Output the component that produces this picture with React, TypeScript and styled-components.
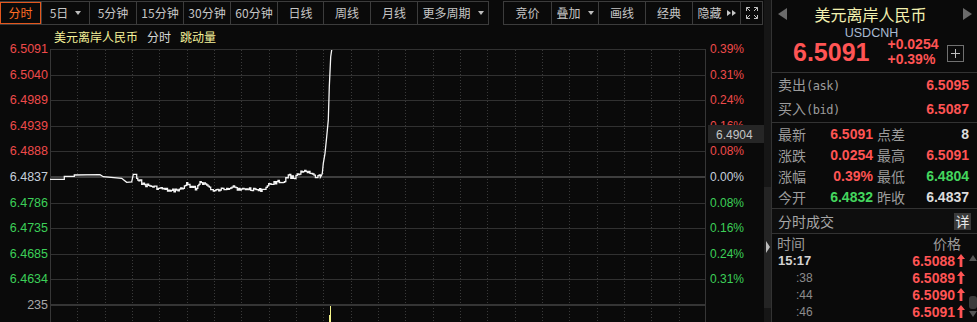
import { FC } from 'react'
import styled, { createGlobalStyle, css } from 'styled-components'

const CJK = `'Noto Sans CJK SC', 'Liberation Sans', sans-serif`
const NUM = `'Liberation Sans', Arial, sans-serif`

const AXIS_RED = '#ee4a4a'
const AXIS_GREEN = '#3ccf58'
const RED = '#ff5454'
const GREEN = '#44d65e'
const GRID = '#313131'

type Tone = 'up' | 'down' | 'flat' | 'mute'

const toneColor = (tone: Tone, axis = false) => {
	switch (tone) {
		case 'up':
			return axis ? AXIS_RED : RED
		case 'down':
			return axis ? AXIS_GREEN : GREEN
		case 'flat':
			return axis ? '#c6d0dc' : '#dcdcdc'
		default:
			return '#9a9a9a'
	}
}

// plot area origin on the page
const PLOT_X = 50
const PLOT_Y = 49
const PLOT_W = 656
const PLOT_H = 273
const ROW = 25.6

const tabsLeft = [
	{ label: '分时', w: 42, active: true },
	{ label: '5日', w: 48, caret: true },
	{ label: '5分钟', w: 47 },
	{ label: '15分钟', w: 47 },
	{ label: '30分钟', w: 47 },
	{ label: '60分钟', w: 47 },
	{ label: '日线', w: 46 },
	{ label: '周线', w: 47 },
	{ label: '月线', w: 47 },
	{ label: '更多周期', w: 71, caret: true }
]

const tabsRight = [
	{ label: '竞价', w: 48 },
	{ label: '叠加', w: 47, caret: true },
	{ label: '画线', w: 47 },
	{ label: '经典', w: 47 },
	{ label: '隐藏', w: 48, more: true }
]

const priceTicks: { text: string; tone: Tone }[] = [
	{ text: '6.5091', tone: 'up' },
	{ text: '6.5040', tone: 'up' },
	{ text: '6.4989', tone: 'up' },
	{ text: '6.4939', tone: 'up' },
	{ text: '6.4888', tone: 'up' },
	{ text: '6.4837', tone: 'flat' },
	{ text: '6.4786', tone: 'down' },
	{ text: '6.4735', tone: 'down' },
	{ text: '6.4685', tone: 'down' },
	{ text: '6.4634', tone: 'down' }
]

const pctTicks: { text: string; tone: Tone }[] = [
	{ text: '0.39%', tone: 'up' },
	{ text: '0.31%', tone: 'up' },
	{ text: '0.24%', tone: 'up' },
	{ text: '0.16%', tone: 'up' },
	{ text: '0.08%', tone: 'up' },
	{ text: '0.00%', tone: 'flat' },
	{ text: '0.08%', tone: 'down' },
	{ text: '0.16%', tone: 'down' },
	{ text: '0.24%', tone: 'down' },
	{ text: '0.31%', tone: 'down' }
]

const stats: { l1: string; v1: string; t1: Tone; l2: string; v2: string; t2: Tone }[] = [
	{ l1: '最新', v1: '6.5091', t1: 'up', l2: '点差', v2: '8', t2: 'flat' },
	{ l1: '涨跌', v1: '0.0254', t1: 'up', l2: '最高', v2: '6.5091', t2: 'up' },
	{ l1: '涨幅', v1: '0.39%', t1: 'up', l2: '最低', v2: '6.4804', t2: 'down' },
	{ l1: '今开', v1: '6.4832', t1: 'down', l2: '昨收', v2: '6.4837', t2: 'flat' }
]

const trades = [
	{ time: '15:17', full: true, price: '6.5088' },
	{ time: ':38', full: false, price: '6.5089' },
	{ time: ':44', full: false, price: '6.5090' },
	{ time: ':46', full: false, price: '6.5091' }
]

// tick line, page coordinates read off the chart
const WAY: [number, number][] = [
	[50, 179.3], [64.3, 179.3], [64.3, 176.3], [74.3, 176.3], [74.3, 175], [100, 174.7],
	[103.3, 176.7], [121.7, 178.3], [126.7, 182.3], [131.7, 182], [133.3, 174.3],
	[136.7, 178.3], [140, 180], [141.7, 184.3], [150, 186], [158.3, 188.3], [165, 189.3],
	[170, 191.2], [176.7, 190], [183.3, 188.3], [186.7, 182.7], [190, 187.3], [196.7, 188.3],
	[200, 181.7], [206.7, 185], [213.3, 191.2], [220, 190], [226.7, 188.3], [233.3, 186],
	[240, 190], [246.7, 189], [255, 189], [258.3, 190.5], [263.3, 189.3], [270, 184],
	[276.7, 181.7], [283.3, 182.3], [288.3, 175], [293.3, 178.3], [297.3, 174], [303.3, 171.7],
	[310, 173.3], [316.7, 177.7], [321.7, 175], [322.3, 173.3], [323.3, 163.3], [325, 153.3],
	[326.7, 136.7], [328.3, 120], [329.3, 86.7], [330.7, 56.7], [331.7, 50]
]

const buildTicks = () => {
	let seed = 17
	const rand = () => {
		seed = (seed * 9301 + 49297) % 233280
		return seed / 233280
	}
	const pts: string[] = []
	let prevY = WAY[0][1]
	for (let i = 0; i < WAY.length - 1; i++) {
		const [x0, y0] = WAY[i]
		const [x1, y1] = WAY[i + 1]
		const noisy = x0 >= 136 && x1 <= 322
		if (!noisy) {
			pts.push(`${x0 - PLOT_X},${y0 - PLOT_Y}`)
			prevY = y0
			continue
		}
		const steps = Math.max(1, Math.round((x1 - x0) / 1.3))
		for (let s = 0; s < steps; s++) {
			const x = x0 + ((x1 - x0) * s) / steps
			let y = y0 + ((y1 - y0) * s) / steps
			if (s > 0) y += (rand() - 0.5) * 3.4
			pts.push(`${(x - PLOT_X).toFixed(1)},${(prevY - PLOT_Y).toFixed(1)}`)
			pts.push(`${(x - PLOT_X).toFixed(1)},${(y - PLOT_Y).toFixed(1)}`)
			prevY = y
		}
	}
	const last = WAY[WAY.length - 1]
	pts.push(`${last[0] - PLOT_X},${last[1] - PLOT_Y}`)
	return pts.join(' ')
}

const tickLine = buildTicks()

const Caret = () => <CaretMark />

const FullscreenIcon = () => (
	<svg width='14' height='14' viewBox='0 0 14 14' fill='none' stroke='#c2c2c2' strokeWidth='1'>
		<path d='M1.5 5V1.5H5M1.5 1.5L5 5' />
		<path d='M9 1.5H12.5V5M12.5 1.5L9 5' />
		<path d='M1.5 9V12.5H5M1.5 12.5L5 9' />
		<path d='M12.5 9V12.5H9M12.5 12.5L9 9' />
	</svg>
)

const UpArrow = () => (
	<svg width='8' height='13' viewBox='0 0 8 13'>
		<path d='M4 0L8 5H5.4V13H2.6V5H0Z' fill={RED} />
	</svg>
)

const PriceAxis: FC = () => (
	<svg width='50' height='297'>
		{priceTicks.map((t, i) => (
			<AxisText key={i} x={48} y={PLOT_Y - 25 + i * ROW} textAnchor='end' fill={toneColor(t.tone, true)}>
				{t.text}
			</AxisText>
		))}
		<AxisText x={48} y={280} textAnchor='end' fill='#a8a8a8'>
			235
		</AxisText>
	</svg>
)

const PctAxis: FC = () => (
	<svg width='58' height='297'>
		<defs>
			<clipPath id='above-cursor'>
				<rect x='0' y='0' width='58' height='100' />
			</clipPath>
		</defs>
		{pctTicks.map((t, i) => (
			<AxisText
				key={i}
				x={4}
				y={PLOT_Y - 25 + i * ROW}
				fill={toneColor(t.tone, true)}
				$size={12}
				clipPath={i === 3 ? 'url(#above-cursor)' : undefined}
			>
				{t.text}
			</AxisText>
		))}
		<rect x='2' y='100' width='56' height='18' fill='#262626' />
		<AxisText x={10} y={109.5} fill='#c4c4c4' $size={12}>
			6.4904
		</AxisText>
	</svg>
)

const Plot: FC = () => {
	const cols = Array.from({ length: 23 }, (_, i) => Math.round(((i + 1) * PLOT_W) / 24) + 0.5)
	const rows = Array.from({ length: 9 }, (_, i) => Math.round((i + 1) * ROW))
	return (
		<svg width={PLOT_W} height={PLOT_H}>
			{cols.map((x) => (
				<line key={x} x1={x} x2={x} y1='1' y2={PLOT_H} stroke='#3a3a3a' strokeDasharray='1 2' />
			))}
			{rows.map((y, i) =>
				i === 4 ? (
					<rect key={y} x='0' y={y - 1} width={PLOT_W} height='2' fill='#3e3e3e' />
				) : (
					<line key={y} x1='0' x2={PLOT_W} y1={y + 0.5} y2={y + 0.5} stroke={GRID} />
				)
			)}
			<rect x='0' y='255' width={PLOT_W} height='2' fill='#353535' />
			<line x1='0' x2={PLOT_W} y1='0.5' y2='0.5' stroke={GRID} />
			<line x1='0.5' x2='0.5' y1='0' y2={PLOT_H} stroke='#363636' />
			<line x1={PLOT_W - 0.5} x2={PLOT_W - 0.5} y1='0' y2={PLOT_H} stroke='#363636' />
			<polyline points={tickLine} fill='none' stroke='#f6f6f6' strokeWidth='1.3' strokeLinejoin='miter' />
			<rect x='280' y='257' width='1' height='16' fill='#f4f48a' />
			<rect x='279' y='266' width='1' height='7' fill='#f4f48a' />
		</svg>
	)
}

const App: FC = () => {
	return (
		<>
			<GlobalStyle />
			<Screen>
				<Main>
					<Toolbar>
						<TabGroup>
							{tabsLeft.map((t) => (
								<Tab key={t.label} $w={t.w} $active={t.active}>
									{t.label}
									{t.caret && <Caret />}
								</Tab>
							))}
						</TabGroup>
						<TabGroup $offset={14}>
							{tabsRight.map((t) => (
								<Tab key={t.label} $w={t.w}>
									{t.label}
									{t.caret && <Caret />}
									{t.more && (
										<MoreMarks>
											<Play />
											<Play />
										</MoreMarks>
									)}
								</Tab>
							))}
							<Tab $w={22}>
								<FullscreenIcon />
							</Tab>
						</TabGroup>
					</Toolbar>
					<ChartRow>
						<AxisColumn $w={50}>
							<PriceAxis />
						</AxisColumn>
						<PlotColumn>
							<PlotHeader>
								<HeaderText $tone='yellow'>美元离岸人民币</HeaderText>
								<HeaderText $tone='plain'>分时</HeaderText>
								<HeaderText $tone='yellow'>跳动量</HeaderText>
							</PlotHeader>
							<Plot />
						</PlotColumn>
						<AxisColumn $w={58}>
							<PctAxis />
						</AxisColumn>
					</ChartRow>
				</Main>

				<Divider>
					<DividerTrack>
						<DividerGrip />
					</DividerTrack>
				</Divider>

				<Panel>
					<QuoteHead>
						<NameRow>
							<Triangle $dir='left' />
							<Name>美元离岸人民币</Name>
							<Triangle $dir='right' />
						</NameRow>
						<Code>USDCNH</Code>
						<PriceRow>
							<BigPrice>6.5091</BigPrice>
							<Changes>
								<span>+0.0254</span>
								<span>+0.39%</span>
							</Changes>
							<PlusBox />
						</PriceRow>
					</QuoteHead>

					<Book>
						<BookRow>
							<Label>
								卖出<Latin>(ask)</Latin>
							</Label>
							<Value $tone='up'>6.5095</Value>
						</BookRow>
						<BookRow>
							<Label>
								买入<Latin>(bid)</Latin>
							</Label>
							<Value $tone='up'>6.5087</Value>
						</BookRow>
					</Book>

					<Stats>
						{stats.map((s) => (
							<StatRow key={s.l1}>
								<Label>{s.l1}</Label>
								<Value $tone={s.t1}>{s.v1}</Value>
								<Label>{s.l2}</Label>
								<Value $tone={s.t2}>{s.v2}</Value>
							</StatRow>
						))}
					</Stats>

					<FlowHead>
						<FlowTitle>分时成交</FlowTitle>
						<DetailButton>详</DetailButton>
					</FlowHead>

					<Flow>
						<FlowList>
							<FlowColumns>
								<Label>时间</Label>
								<Label>价格</Label>
							</FlowColumns>
							{trades.map((t) => (
								<TradeRow key={t.time}>
									<TradeTime $full={t.full}>{t.time}</TradeTime>
									<TradePrice>
										{t.price}
										<UpArrow />
									</TradePrice>
								</TradeRow>
							))}
						</FlowList>
						<ScrollBar>
							<ScrollArrow $dir='up' />
							<ScrollThumb />
							<ScrollArrow $dir='down' />
						</ScrollBar>
					</Flow>
				</Panel>
			</Screen>
		</>
	)
}

const GlobalStyle = createGlobalStyle`
	html, body {
		margin: 0;
		padding: 0;
		background: #0a0a0a;
		overflow: hidden;
	}
`

const Screen = styled.div`
	display: flex;
	width: 977px;
	height: 322px;
	overflow: hidden;
	background: #0a0a0a;
	font-family: ${CJK};
`

const Main = styled.div`
	display: flex;
	flex: none;
	flex-direction: column;
	width: 764px;
`

const Toolbar = styled.div`
	display: flex;
	flex: none;
	box-sizing: border-box;
	height: 25px;
	padding-top: 1px;
`

const TabGroup = styled.div<{ $offset?: number }>`
	display: flex;
	box-sizing: border-box;
	height: 24px;
	border-top: 1px solid #3c3c3c;
	border-bottom: 1px solid #3c3c3c;
	${(p) =>
		p.$offset &&
		css`
			margin-left: ${p.$offset}px;
			border-left: 1px solid #3c3c3c;
		`}
`

const Tab = styled.div<{ $w: number; $active?: boolean }>`
	display: flex;
	align-items: center;
	justify-content: center;
	gap: 5px;
	box-sizing: border-box;
	width: ${(p) => p.$w}px;
	border-right: 1px solid #3c3c3c;
	color: #c6c6c6;
	font-size: 12px;
	line-height: 14px;
	${(p) =>
		p.$active &&
		css`
			color: #ff6d24;
			box-shadow: inset 0 0 0 1px #e4571d;
		`}
`

const CaretMark = styled.span`
	width: 0;
	height: 0;
	margin-left: 2px;
	border-top: 4px solid #bdbdbd;
	border-left: 3.5px solid transparent;
	border-right: 3.5px solid transparent;
`

const MoreMarks = styled.span`
	display: flex;
	gap: 1px;
`

const Play = styled.span`
	width: 0;
	height: 0;
	border-top: 3.5px solid transparent;
	border-bottom: 3.5px solid transparent;
	border-left: 4px solid #c6c6c6;
`

const ChartRow = styled.div`
	display: flex;
	flex: 1;
	min-height: 0;
`

const AxisColumn = styled.div<{ $w: number }>`
	flex: none;
	width: ${(p) => p.$w}px;

	svg {
		display: block;
	}
`

const AxisText = styled.text<{ $size?: number }>`
	font-family: ${NUM};
	font-size: ${(p) => p.$size ?? 12.5}px;
	dominant-baseline: central;
`

const PlotColumn = styled.div`
	display: flex;
	flex: none;
	flex-direction: column;
	width: ${PLOT_W}px;

	svg {
		display: block;
	}
`

const PlotHeader = styled.div`
	display: flex;
	align-items: center;
	gap: 9px;
	height: 24px;
	padding-left: 4px;
	font-size: 12px;
	line-height: 14px;
`

const HeaderText = styled.span<{ $tone: 'yellow' | 'plain' }>`
	color: ${(p) => (p.$tone === 'yellow' ? '#f6f39a' : '#d6d6d6')};
`

const Divider = styled.div`
	display: flex;
	flex: none;
	flex-direction: column;
	box-sizing: border-box;
	width: 7px;
	padding-top: 187px;
	background: #161616;
`

const DividerTrack = styled.div`
	display: flex;
	justify-content: center;
	box-sizing: border-box;
	height: 121px;
	padding-top: 54px;
	background: #242424;
`

const DividerGrip = styled.span`
	width: 0;
	height: 0;
	border-top: 6px solid transparent;
	border-bottom: 6px solid transparent;
	border-left: 4px solid #bcbcbc;
`

const Panel = styled.aside`
	display: flex;
	flex: none;
	flex-direction: column;
	box-sizing: border-box;
	width: 206px;
	border-left: 1px solid #333;
`

const QuoteHead = styled.div`
	box-sizing: border-box;
	height: 73px;
	border-bottom: 1px solid #333;
`

const NameRow = styled.div`
	display: flex;
	align-items: center;
	height: 27px;
	padding: 0 5px 0 6px;
`

const Triangle = styled.span<{ $dir: 'left' | 'right' }>`
	width: 0;
	height: 0;
	border-top: 6.5px solid transparent;
	border-bottom: 6.5px solid transparent;
	${(p) =>
		p.$dir === 'left'
			? css`
					border-right: 9px solid #6b6b6b;
			  `
			: css`
					border-left: 9px solid #6b6b6b;
			  `}
`

const Name = styled.div`
	flex: 1;
	padding-right: 9px;
	color: #f3f1b0;
	font-size: 16px;
	line-height: 18px;
	text-align: center;
`

const Code = styled.div`
	padding-right: 6px;
	color: #a9bad2;
	font-family: ${NUM};
	font-size: 12.5px;
	line-height: 12px;
	text-align: center;
`

const PriceRow = styled.div`
	display: flex;
	align-items: flex-start;
	padding-left: 21px;
`

const BigPrice = styled.div`
	color: ${RED};
	font-family: ${NUM};
	font-size: 25px;
	font-weight: 700;
	line-height: 26px;
`

const Changes = styled.div`
	display: flex;
	flex-direction: column;
	margin: -2px 0 0 18px;
	color: ${RED};
	font-family: ${NUM};
	font-size: 14px;
	font-weight: 700;
	line-height: 15px;
`

const PlusBox = styled.div`
	position: relative;
	box-sizing: border-box;
	width: 17px;
	height: 17px;
	margin: 6px 0 0 9px;
	border: 1px solid #707070;

	&::before,
	&::after {
		content: '';
		position: absolute;
		background: #bdbdbd;
	}
	&::before {
		left: 3px;
		top: 7px;
		width: 9px;
		height: 1px;
	}
	&::after {
		left: 7px;
		top: 3px;
		width: 1px;
		height: 9px;
	}
`

const Book = styled.div`
	padding-bottom: 1px;
	border-bottom: 1px solid #333;
`

const BookRow = styled.div`
	display: flex;
	align-items: center;
	justify-content: space-between;
	height: 24px;
	padding: 0 8px 0 6px;
`

const Label = styled.span`
	color: #9c9c9c;
	font-size: 14px;
	line-height: 16px;
	white-space: nowrap;
`

const Latin = styled.span`
	font-family: 'DejaVu Sans Mono', monospace;
	font-size: 12px;
	letter-spacing: -0.5px;
`

const Value = styled.span<{ $tone: Tone }>`
	color: ${(p) => toneColor(p.$tone)};
	font-family: ${NUM};
	font-size: 14px;
	font-weight: 700;
	line-height: 16px;
	text-align: right;
`

const Stats = styled.div`
	padding: 0 8px 1px 6px;
	border-bottom: 1px solid #333;
`

const StatRow = styled.div`
	display: grid;
	grid-template-columns: 30px 65px 33px 1fr;
	align-items: center;
	height: 21px;

	& > :nth-child(3) {
		padding-left: 4px;
	}
`

const FlowHead = styled.div`
	display: flex;
	align-items: center;
	justify-content: space-between;
	box-sizing: border-box;
	height: 25px;
	padding: 0 6px 0 6px;
	border-bottom: 1px solid #333;
	background: #0e0e0e;
`

const FlowTitle = styled.span`
	color: #a6a6a6;
	font-size: 14px;
	line-height: 16px;
`

const DetailButton = styled.span`
	display: flex;
	align-items: center;
	justify-content: center;
	width: 17px;
	height: 17px;
	background: #3a3a3a;
	color: #e6e6e6;
	font-size: 14px;
	line-height: 16px;
`

const Flow = styled.div`
	display: flex;
	flex: 1;
	min-height: 0;
`

const FlowList = styled.div`
	flex: 1;
	padding: 0 3px 0 5px;
`

const FlowColumns = styled.div`
	display: flex;
	align-items: center;
	justify-content: space-between;
	height: 18px;
	padding-right: 4px;
`

const TradeRow = styled.div`
	display: flex;
	align-items: center;
	justify-content: space-between;
	height: 17px;
`

const TradeTime = styled.span<{ $full: boolean }>`
	font-family: ${NUM};
	${(p) =>
		p.$full
			? css`
					padding-left: 1px;
					color: #d2d2d2;
					font-size: 13px;
					font-weight: 700;
			  `
			: css`
					padding-left: 19px;
					color: #8c8c8c;
					font-size: 12px;
			  `}
`

const TradePrice = styled.span`
	display: flex;
	align-items: center;
	gap: 2px;
	color: ${RED};
	font-family: ${NUM};
	font-size: 14px;
	font-weight: 700;
	line-height: 16px;

	svg {
		display: block;
	}
`

const ScrollBar = styled.div`
	display: flex;
	flex: none;
	flex-direction: column;
	align-items: center;
	width: 9px;
	padding-top: 21px;
`

const ScrollArrow = styled.span<{ $dir: 'up' | 'down' }>`
	width: 0;
	height: 0;
	border-left: 4px solid transparent;
	border-right: 4px solid transparent;
	${(p) =>
		p.$dir === 'up'
			? css`
					border-bottom: 6px solid #555;
			  `
			: css`
					margin-top: 2px;
					border-top: 6px solid #555;
			  `}
`

const ScrollThumb = styled.span`
	width: 8px;
	height: 13px;
	margin-top: 35px;
	border-radius: 3px;
	background: #3c3c3c;
`

export default App
